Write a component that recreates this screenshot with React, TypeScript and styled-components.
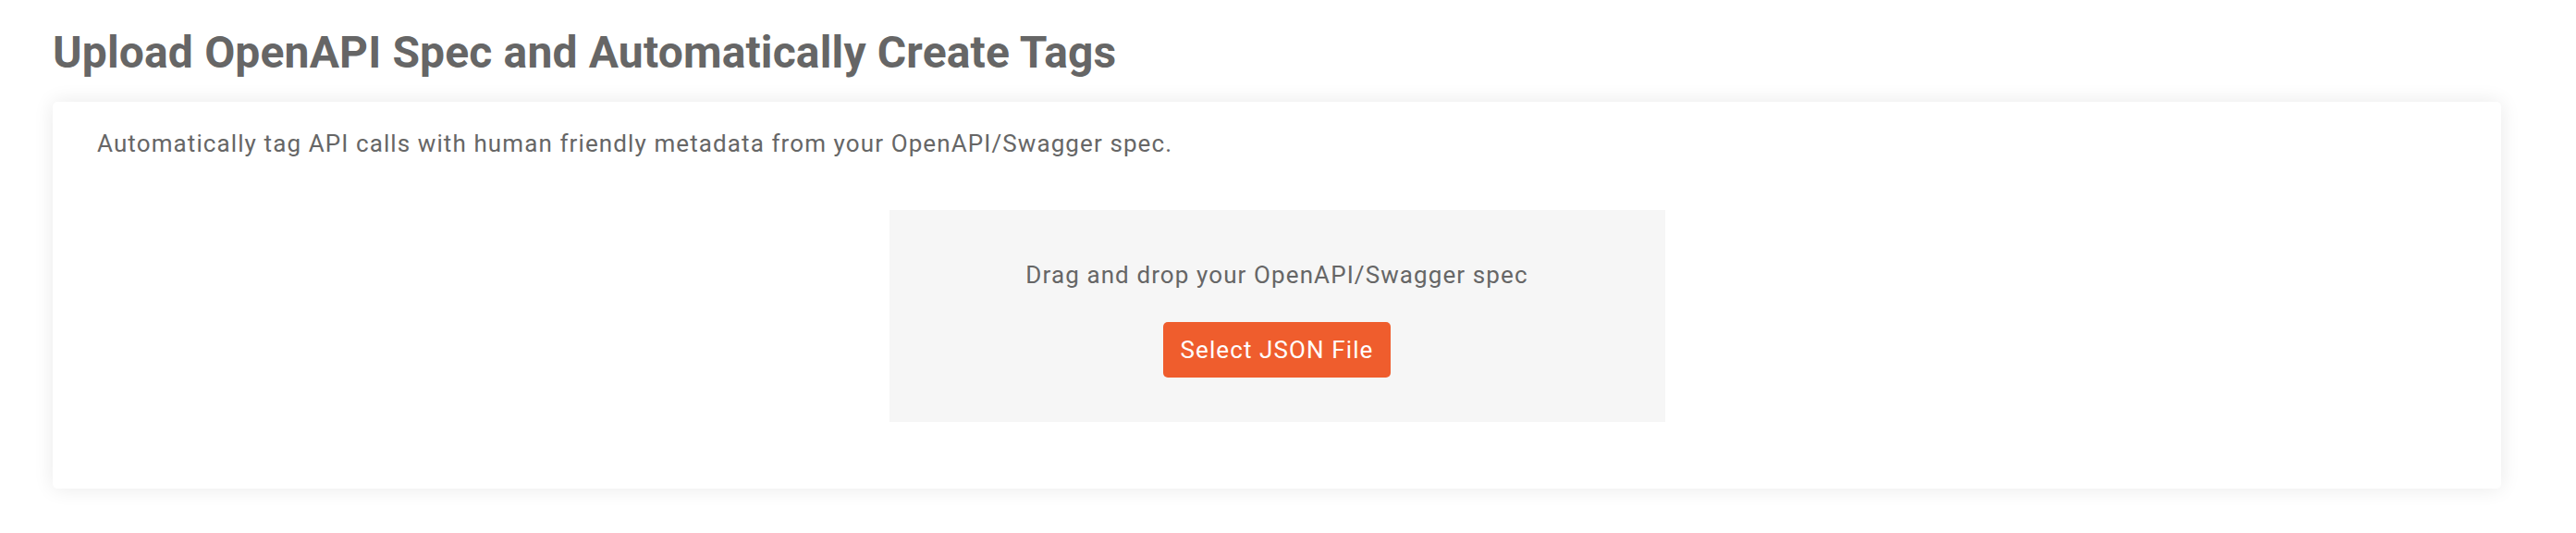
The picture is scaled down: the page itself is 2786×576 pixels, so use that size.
import React, {FC} from "react";
import styled, {createGlobalStyle} from 'styled-components';

const GlobalStyle = createGlobalStyle`
  html, body {
    margin: 0;
    padding: 0;
    background: #ffffff;
    font-family: Roboto, "Liberation Sans", sans-serif;
  }
`;

const Page = styled.div`
  padding: 23px 81px 48px 57px;
`;

const Title = styled.h2`
  margin: 0 0 19px;
  font-size: 48px;
  line-height: 68px;
  font-weight: 700;
  letter-spacing: 0.15px;
  color: #666666;
`;

const Card = styled.section`
  background: #ffffff;
  border-radius: 5px;
  box-shadow: 0 0 22px rgba(0, 0, 0, 0.09);
  padding: 26px 48px 72px;
`;

const Description = styled.p`
  margin: 0 0 52px;
  font-size: 26px;
  line-height: 39px;
  letter-spacing: 1.1px;
  color: #666666;
`;

const DropZone = styled.div`
  box-sizing: border-box;
  width: 839px;
  height: 229px;
  margin: 0 auto;
  padding: 52px 0 48px;
  background: #f6f6f6;
  display: flex;
  flex-direction: column;
  align-items: center;
  gap: 33px;
`;

const DropText = styled.div`
  font-size: 26px;
  line-height: 36px;
  letter-spacing: 1.1px;
  color: #666666;
`;

interface ButtonProps {
  $primary?: boolean
}

const Button = styled.button<ButtonProps>`
  height: 60px;
  padding: 0 19px;
  border: none;
  border-radius: 5px;
  background: ${({$primary}) => $primary ? '#ef5d2d' : '#dddddd'};
  color: #ffffff;
  font-family: Roboto, "Liberation Sans", sans-serif;
  font-size: 26px;
  letter-spacing: 1.1px;
  cursor: pointer;
`;

const App: FC = () => {
  return (
    <>
      <GlobalStyle/>
      <Page>
        <Title>Upload OpenAPI Spec and Automatically Create Tags</Title>
        <Card>
          <Description>
            Automatically tag API calls with human friendly metadata from your OpenAPI/Swagger spec.
          </Description>
          <DropZone>
            <DropText>Drag and drop your OpenAPI/Swagger spec</DropText>
            <Button $primary>Select JSON File</Button>
          </DropZone>
        </Card>
      </Page>
    </>
  )
};

export default App;
